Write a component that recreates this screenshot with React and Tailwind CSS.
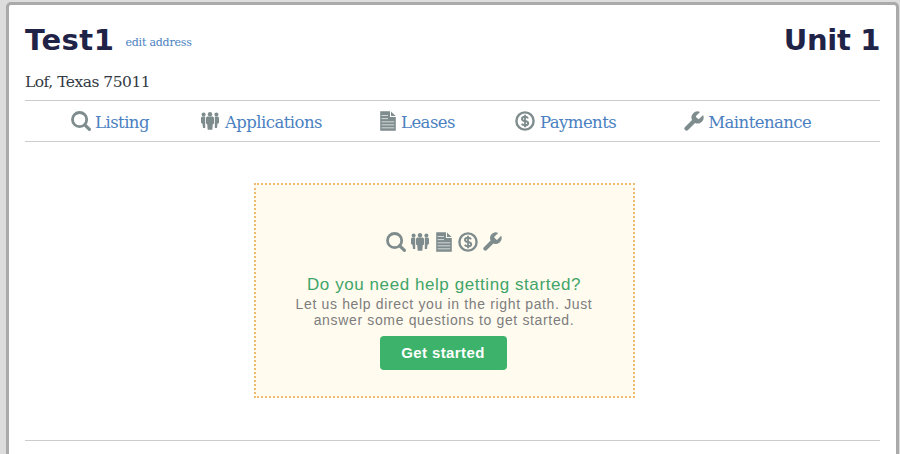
import React from "react";

const serif = "[font-family:'DejaVu_Serif',serif]";

function Search({ size = 20 }) {
  return (
    <svg width={size} height={size} viewBox="0 0 20 20" fill="none" stroke="currentColor">
      <circle cx="8.6" cy="8.6" r="7.1" strokeWidth="2.8" />
      <path d="M13.8 13.8l4.6 4.6" strokeWidth="3.2" strokeLinecap="round" />
    </svg>
  );
}

function Wrench({ size = 21 }) {
  return (
    <svg width={size} height={size} viewBox="1.6 1.6 20.8 20.8" fill="currentColor">
      <path d="M14.7 6.3a1 1 0 0 0 0 1.4l1.6 1.6a1 1 0 0 0 1.4 0l3.77-3.77a6 6 0 0 1-7.94 7.94l-6.91 6.91a2.12 2.12 0 0 1-3-3l6.91-6.91a6 6 0 0 1 7.94-7.94l-3.76 3.76z" />
    </svg>
  );
}

function People({ size = 20 }) {
  return (
    <svg width={size} height={size} viewBox="0 0 20 20" fill="currentColor">
      <circle cx="3.6" cy="3.6" r="2" />
      <circle cx="10" cy="3.2" r="2.2" />
      <circle cx="16.4" cy="3.6" r="2" />
      <path d="M1 7.2c0-1 .8-1.7 1.8-1.7h2.4v11.6H3l-.5-4.4L1 12z" />
      <path d="M19 7.2c0-1-.8-1.7-1.8-1.7h-2.4v11.6H17l.5-4.4 1.5-.7z" />
      <path d="M6 7c0-1 .9-1.6 1.8-1.6h4.4c.9 0 1.8.6 1.8 1.6v5.4l-1.2.8-.5 5.6H7.7l-.5-5.6-1.2-.8z" />
    </svg>
  );
}

function Doc({ size = 20 }) {
  return (
    <svg width={size} height={size} viewBox="0 0 20 20" fill="currentColor">
      <path d="M2.2.3h9.8v5.7h5.8v13.7H2.2z" />
      <path d="M13 .6l4.6 4.4H13z" />
      <g fill="#ffffff" fillOpacity="0.75">
        <rect x="3.6" y="4" width="6.4" height="0.9" />
        <rect x="3.6" y="7.2" width="6.4" height="0.9" />
        <rect x="3.6" y="10.4" width="12.6" height="0.9" />
        <rect x="3.6" y="13.4" width="12.6" height="0.9" />
        <rect x="3.6" y="16.4" width="12.6" height="0.9" />
      </g>
    </svg>
  );
}

function Dollar({ size = 20 }) {
  return (
    <svg width={size} height={size} viewBox="0 0 20 20" fill="none" stroke="currentColor">
      <circle cx="10" cy="10" r="8.6" strokeWidth="2.4" />
      <path d="M13 7.4c-.5-1-1.6-1.6-3-1.6-1.7 0-3 .8-3 2.1 0 2.9 6.2 1.5 6.2 4.3 0 1.3-1.4 2.1-3.2 2.1-1.5 0-2.7-.6-3.2-1.6" strokeWidth="2" />
      <path d="M10 3.8v12.4" strokeWidth="1.8" />
    </svg>
  );
}

function NavItem({ icon, label, className = "" }) {
  return (
    <a className={`flex items-center ${className}`}>
      <span className="flex text-[#7f8c8d]">{icon}</span>
      <span className="mt-[4px] text-[16.5px] tracking-[-0.55px] text-[#4a7fc1]">{label}</span>
    </a>
  );
}

const headFont = "[font-family:'DejaVu_Sans',sans-serif] font-bold text-[29px] leading-[42px] text-[#1f2347]";
const sans = "[font-family:'Liberation_Sans',sans-serif]";

export default function App() {
  return (
    <div className={`h-[454px] overflow-hidden bg-[#dddddd] pl-[6px] pr-[1px] pt-[2px] ${serif}`}>
      <div className="h-[470px] rounded-[5px] border-[3px] border-[#aaaaaa] bg-white px-[16px] pt-[14px]">
        <div className="flex h-[41px] items-start justify-between">
          <div className="flex items-start">
            <h1 className={`${headFont} tracking-[0.5px]`}>Test1</h1>
            <a className="ml-[11px] mt-[16px] text-[11px] leading-[16px] tracking-[-0.2px] text-[#4a7fc1]">edit address</a>
          </div>
          <div className={`${headFont} tracking-[-0.35px]`}>Unit 1</div>
        </div>
        <p className="mt-[10px] text-[15.5px] leading-[24px] tracking-[-0.5px] text-[#333a44]">Lof, Texas 75011</p>
        <nav className="mt-[6px] flex h-[42px] items-center border-y border-[#cccccc] pl-[46px]">
          <NavItem className="gap-[4px]" icon={<Search />} label="Listing" />
          <NavItem className="ml-[51px] gap-[5px]" icon={<People />} label="Applications" />
          <NavItem className="ml-[56px] gap-[3px]" icon={<Doc />} label="Leases" />
          <NavItem className="ml-[60px] gap-[5px]" icon={<Dollar />} label="Payments" />
          <NavItem className="ml-[67px] gap-[4px]" icon={<Wrench />} label="Maintenance" />
        </nav>
        <div className="flex justify-center pt-[41px]">
          <div className="ml-[-17px] flex h-[215px] w-[381px] flex-col items-center border-2 border-dotted border-[#eebb70] bg-[#fffbef] pt-[47px]">
            <div className="flex items-center gap-[4px] text-[#7f8c8d]">
              <Search />
              <People />
              <Doc />
              <Dollar />
              <Wrench size={20} />
            </div>
            <h2 className={`mt-[21px] ${sans} text-[17px] leading-[24px] tracking-[0.57px] text-[#3fa568]`}>Do you need help getting started?</h2>
            <p className={`mt-[-1px] w-[330px] text-center ${sans} text-[14px] leading-[16px] tracking-[0.65px] text-[#7d7d7d]`}>Let us help direct you in the right path. Just answer some questions to get started.</p>
            <button className={`mr-[2px] mt-[8px] h-[34px] w-[127px] rounded-[4px] bg-[#3cb26a] ${sans} text-[15px] font-bold tracking-[0.4px] text-white`}>Get started</button>
          </div>
        </div>
        <div className="mt-[42px] border-t border-[#cccccc]" />
      </div>
    </div>
  );
}
